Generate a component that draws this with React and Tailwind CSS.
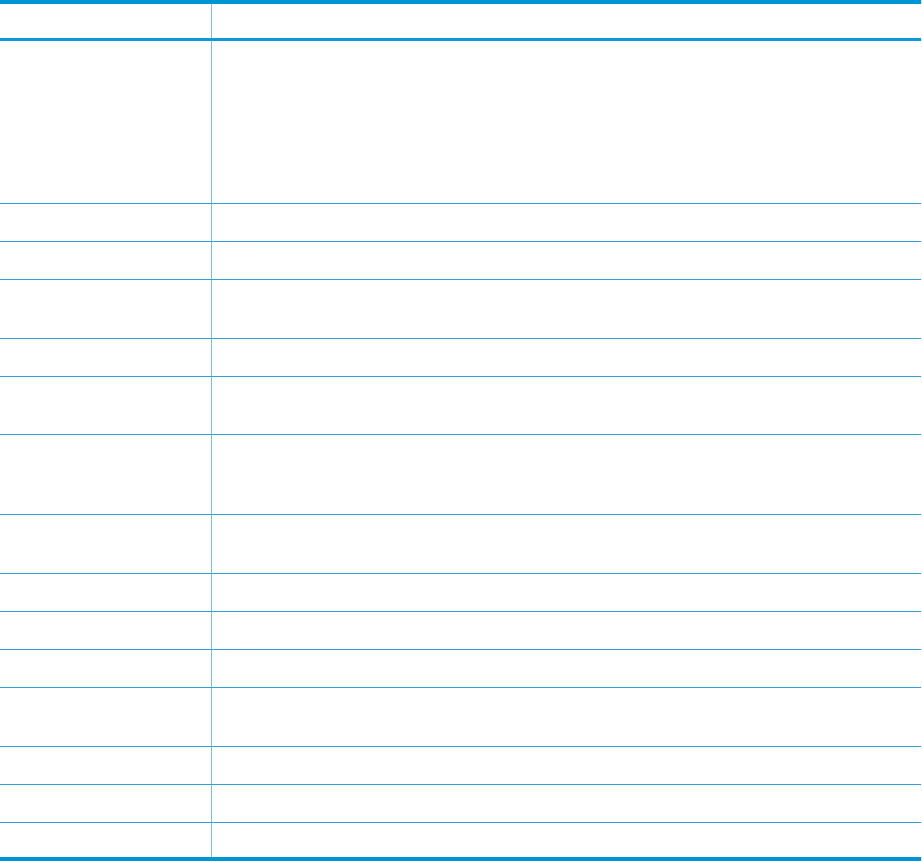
import React from "react";

const rows = [162, 37, 37, 58, 37, 57, 79, 58, 37, 37, 37, 58, 37, 37, 34];

const Row = ({ h, last }) => (
  <div
    className={`grid grid-cols-[212px_1fr] ${last ? "" : "border-b border-[#2ea3db]"}`}
    style={{ height: h + (last ? 0 : 1) }}
  >
    <div className="border-r border-[#74c3e8]" />
    <div />
  </div>
);

export default function App() {
  return (
    <div className="w-[922px] h-[862px] bg-white font-['Liberation_Sans',sans-serif]">
      <div className="w-[921px] border-t-4 border-b-4 border-[#0096d6]">
        <div className="grid grid-cols-[212px_1fr] h-[37px] border-b-[3px] border-[#0a9ad8]">
          <div className="border-r border-[#74c3e8]" />
          <div />
        </div>
        {rows.map((h, i) => (
          <Row key={i} h={h} last={i === rows.length - 1} />
        ))}
      </div>
    </div>
  );
}
